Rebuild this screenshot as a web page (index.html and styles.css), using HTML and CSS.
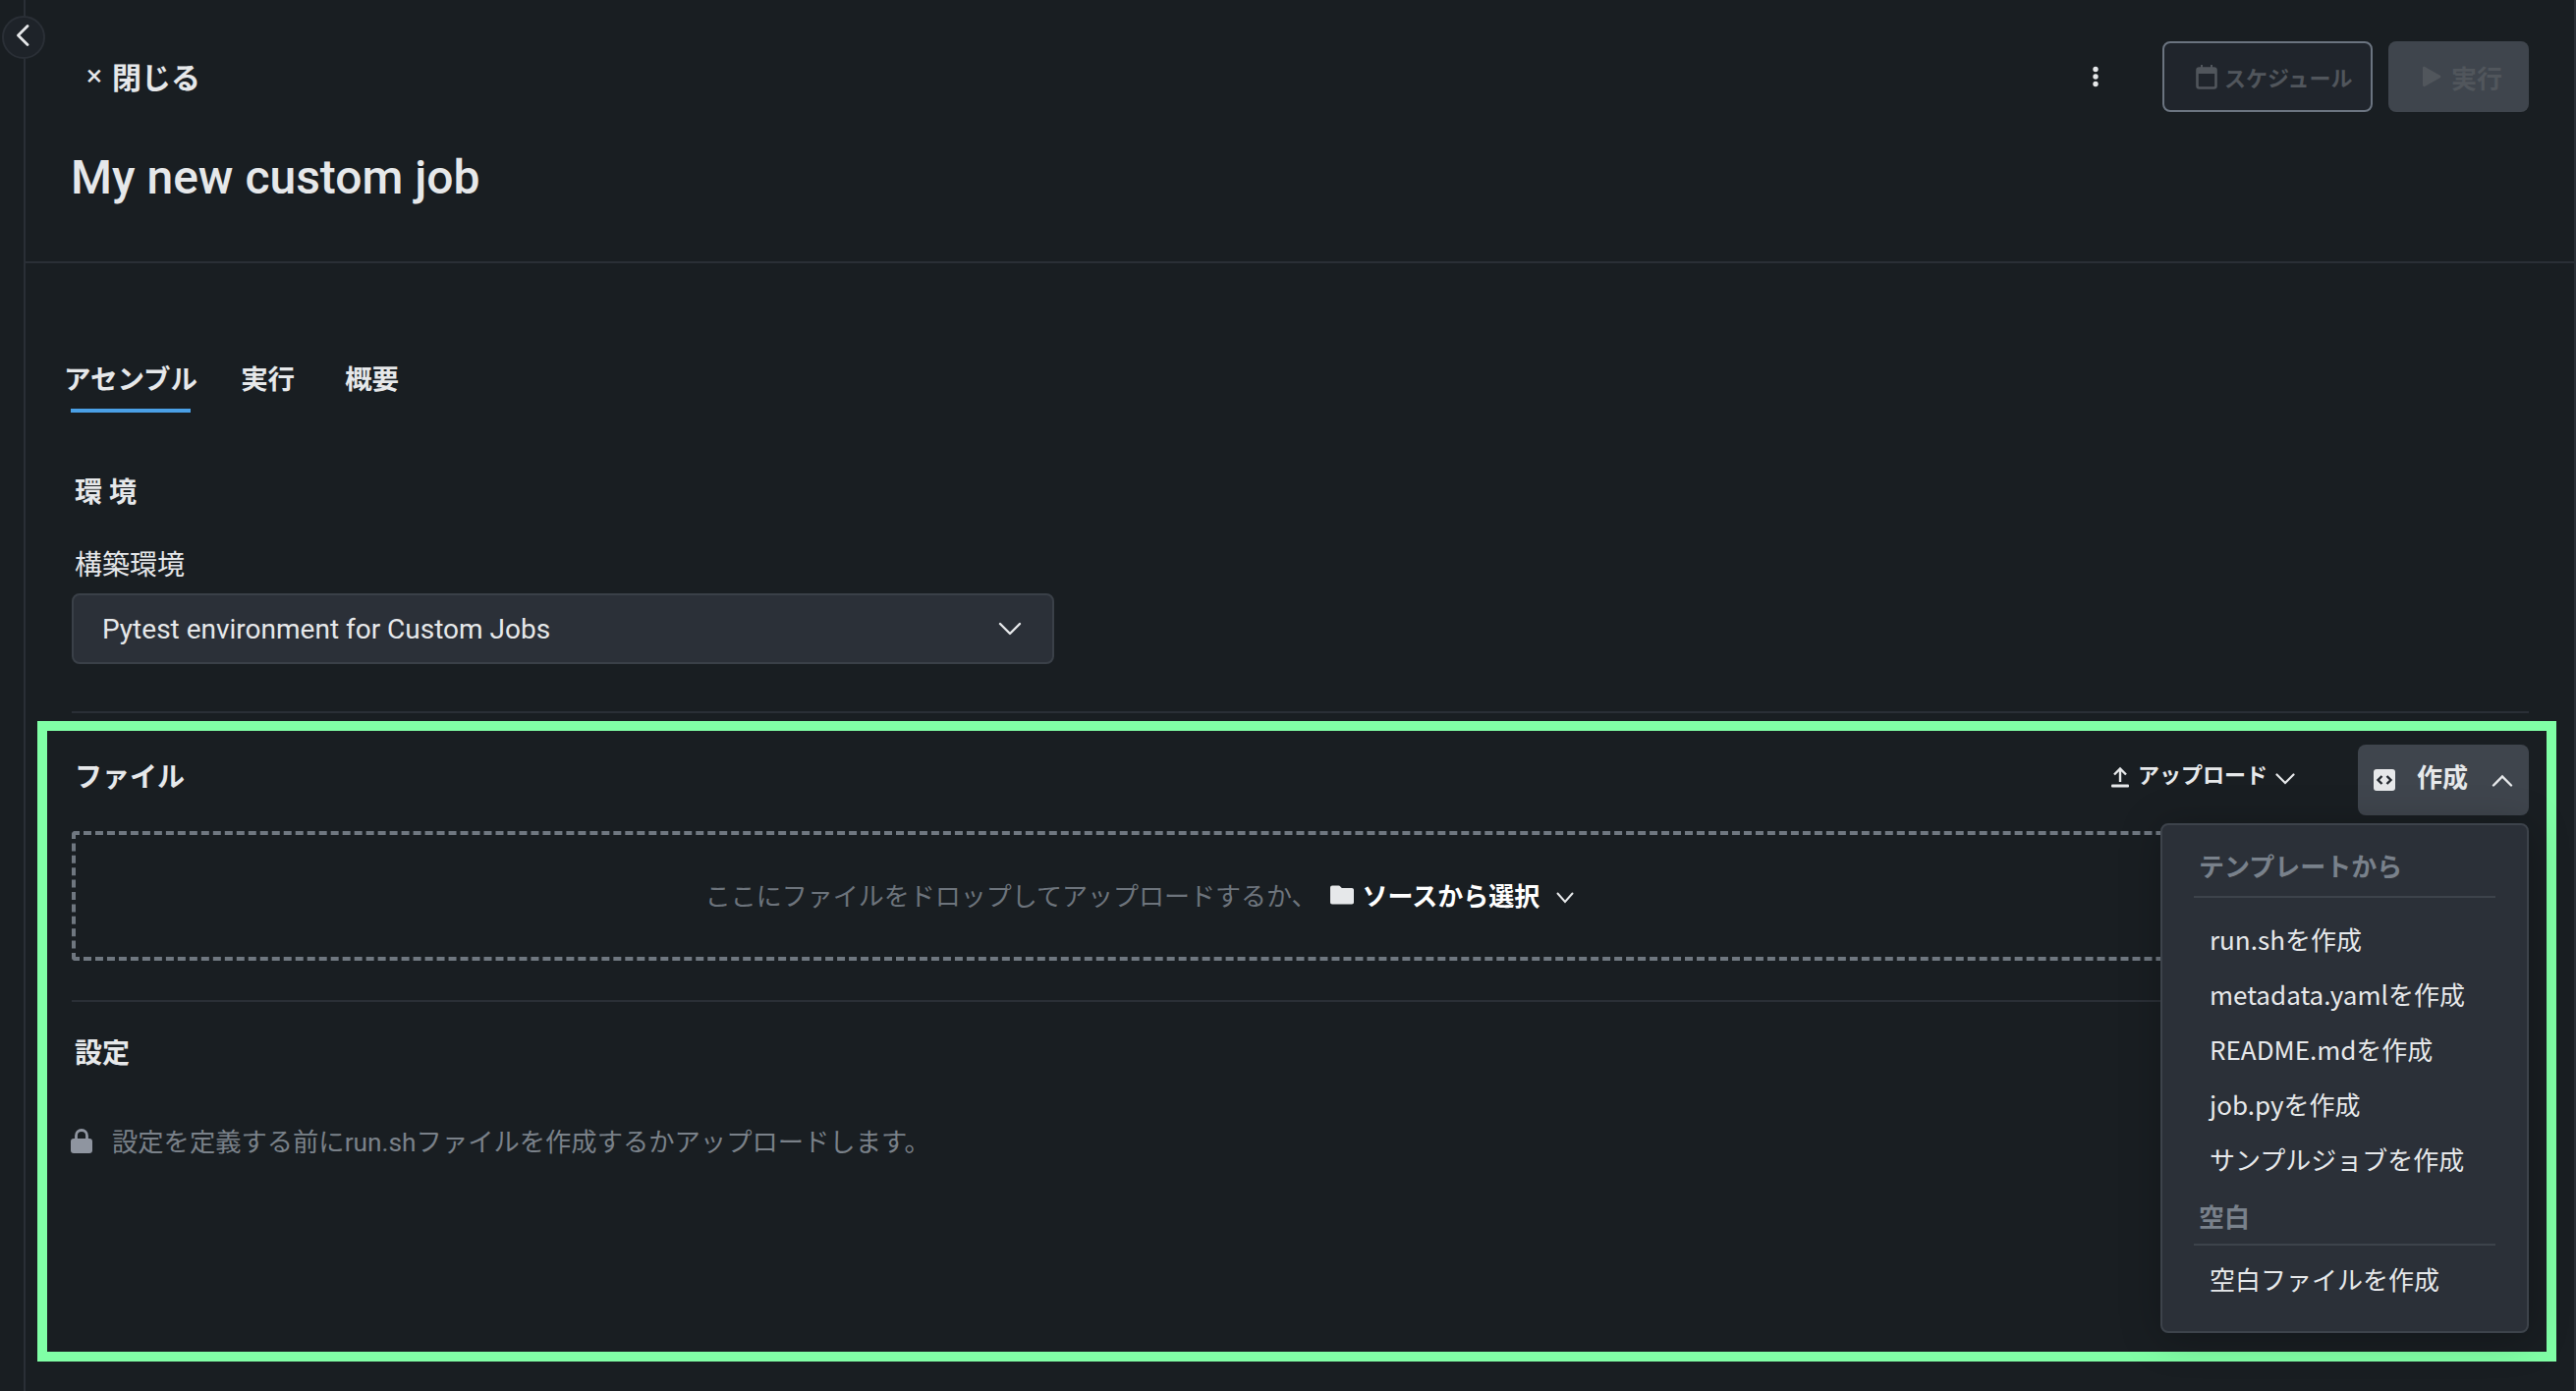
FILE: index.html
```html
<!DOCTYPE html>
<html lang="ja">
<head>
  <meta charset="UTF-8" />
  <title>My new custom job</title>
  <link rel="stylesheet" href="styles.css">
</head>
<body>

  <div class="page">
    <div class="rail">
      <button class="rail-toggle">
        <svg width="14" height="22" viewBox="0 0 14 22"><path d="M12 1.500 2.500 11l9.500 9.500" fill="none" stroke="#e6e8ea" stroke-width="2.800" stroke-linecap="round" stroke-linejoin="round"/></svg>
      </button>
    </div>

    <div class="main">
      <header class="head">
        <div class="head-top">
          <button class="btn-close"><span class="close-x">×</span>閉じる</button>
          <div class="head-actions">
            <svg class="kebab" width="8" height="22" viewBox="0 0 8 22" fill="#e6e8ea"><circle cx="4" cy="3.500" r="2.700"/><circle cx="4" cy="11" r="2.700"/><circle cx="4" cy="18.500" r="2.700"/></svg>
            <button class="btn-schedule">
              <svg width="22" height="25" viewBox="0 0 22 25"><rect x="1.500" y="3.500" width="19" height="20" rx="2" fill="none" stroke="#51565c" stroke-width="2.600"/><rect x="1.500" y="3" width="19" height="6" fill="#51565c"/><rect x="5" y="0" width="2" height="4" fill="#51565c"/><rect x="15" y="0" width="2" height="4" fill="#51565c"/></svg>
              スケジュール
            </button>
            <button class="btn-run">
              <svg width="20" height="22" viewBox="0 0 20 22"><path d="M1 2.200C1 1 2.200.4 3.200 1l15.400 8.800c1 .6 1 1.900 0 2.500L3.200 21c-1 .6-2.200 0-2.200-1.200z" fill="#51565c"/></svg>
              実行
            </button>
          </div>
        </div>
        <h1>My new custom job</h1>
      </header>

      <div class="content">
        <nav class="tabs">
          <a class="tab active"><span>アセンブル</span></a>
          <a class="tab"><span>実行</span></a>
          <a class="tab"><span>概要</span></a>
        </nav>

        <h2 class="section-title env-title">環 境</h2>
        <div class="field-label">構築環境</div>
        <div class="select">
          <span>Pytest environment for Custom Jobs</span>
          <svg width="24" height="14" viewBox="0 0 24 14"><path d="M2 2l10 10L22 2" fill="none" stroke="#e6e8ea" stroke-width="2.400" stroke-linecap="round" stroke-linejoin="round"/></svg>
        </div>
        <hr class="sep env-sep">

        <div class="files-head">
          <h2 class="section-title files-title">ファイル</h2>
          <div class="files-actions">
            <button class="btn-upload">
              <svg width="18" height="22" viewBox="0 0 18 22"><path d="M9 16V3M3 8.500 9 2.500l6 6" fill="none" stroke="#e6e8ea" stroke-width="2.400"/><rect x="0" y="18.500" width="18" height="3" rx="1" fill="#e6e8ea"/></svg>
              <span class="upload-label">アップロード</span>
              <svg class="upload-chev" width="20" height="12" viewBox="0 0 20 12"><path d="M1.500 1.500 10 10l8.500-8.500" fill="none" stroke="#e6e8ea" stroke-width="2.200" stroke-linecap="round"/></svg>
            </button>
            <button class="btn-create">
              <svg width="22" height="22" viewBox="0 0 22 22"><rect width="22" height="22" rx="3" fill="#e6e8ea"/><path d="M8.500 7 4.500 11l4 4M13.500 7l4 4-4 4" fill="none" stroke="#23282e" stroke-width="2.400"/></svg>
              <span>作成</span>
              <svg width="22" height="13" viewBox="0 0 22 13"><path d="M2 11.500l9-9 9 9" fill="none" stroke="#e6e8ea" stroke-width="2.400" stroke-linecap="round"/></svg>
            </button>
          </div>

          <div class="menu">
            <div class="menu-title">テンプレートから</div>
            <div class="menu-items">
              <div class="menu-item">run.shを作成</div>
              <div class="menu-item">metadata.yamlを作成</div>
              <div class="menu-item">README.mdを作成</div>
              <div class="menu-item">job.pyを作成</div>
              <div class="menu-item">サンプルジョブを作成</div>
            </div>
            <div class="menu-title menu-title-2">空白</div>
            <div class="menu-items menu-items-2">
              <div class="menu-item">空白ファイルを作成</div>
            </div>
          </div>
        </div>

        <div class="dropzone">
          <span class="drop-text">ここにファイルをドロップしてアップロードするか、</span>
          <span class="drop-source">
            <svg width="24" height="20" viewBox="0 0 24 20"><path d="M0 2.500C0 1.200 1 .5 2 .5h6.500c.8 0 1.300.4 1.800 1l1.500 1.500H22c1.200 0 2 .8 2 2v12.500c0 1.200-.8 2-2 2H2c-1.200 0-2-.8-2-2z" fill="#e6e8ea"/></svg>
            ソースから選択
            <svg class="source-chev" width="18" height="12" viewBox="0 0 18 12"><path d="M1.500 1.500 9 10l7.500-8.500" fill="none" stroke="#e6e8ea" stroke-width="2" stroke-linecap="round"/></svg>
          </span>
        </div>
        <hr class="sep settings-sep">

        <h2 class="section-title settings-title">設定</h2>
        <div class="locked">
          <svg width="22" height="25" viewBox="0 0 22 25"><path d="M5.500 11V7a5.500 5.500 0 0 1 11 0v4" fill="none" stroke="#8f95a0" stroke-width="2.800"/><rect x="0" y="10" width="22" height="15" rx="3" fill="#8f95a0"/></svg>
          <span>設定を定義する前にrun.shファイルを作成するかアップロードします。</span>
        </div>
      </div>
    </div>
  </div>

  <!-- annotation frame over the screenshot -->
  <div class="highlight"></div>

</body>
</html>
```

FILE: styles.css
```css
body {
  font-family: Roboto, "Noto Sans CJK JP", sans-serif;
  background-color: #191e22;
  color: #e6e8ea;
  margin: 0;
  height: 100vh;
  overflow: hidden;
}

button {
  font-family: inherit;
  border: none;
  background: none;
  color: inherit;
  padding: 0;
}

h1, h2 {
  margin: 0;
}

.page {
  display: flex;
  height: 100%;
}

/* Left rail */
.rail {
  position: relative;
  flex: none;
  width: 24px;
  border-right: 2px solid #2a2f36;
}

.rail-toggle {
  position: absolute;
  top: 16px;
  left: 2px;
  width: 44px;
  height: 44px;
  display: flex;
  align-items: center;
  justify-content: center;
  box-sizing: border-box;
  padding: 0 2px 4px 0;
  background-color: #1e2329;
  border: 2px solid #2a2f36;
  border-radius: 50%;
}

.main {
  flex: 1;
  min-width: 0;
  border-right: 2px solid #2a2f36;
}

/* Header */
.head {
  height: 268px;
  box-sizing: border-box;
  padding: 42px 46px 0 47px;
  border-bottom: 2px solid #2a2f36;
}

.head-top {
  display: flex;
  justify-content: space-between;
  align-items: center;
  height: 72px;
}

.btn-close {
  display: flex;
  align-items: center;
  gap: 10px;
  margin: -3px 0 0 15px;
  font-size: 30px;
  font-weight: 700;
}

.close-x {
  font-size: 30px;
  font-weight: 400;
}

.head-actions {
  display: flex;
  align-items: center;
}

.kebab {
  margin-right: 64px;
}

.btn-schedule,
.btn-run {
  display: flex;
  align-items: center;
  height: 72px;
  box-sizing: border-box;
  border-radius: 8px;
  color: #51565c;
  font-weight: 700;
}

.btn-schedule {
  width: 214px;
  gap: 7px;
  padding-left: 32px;
  font-size: 22px;
  background-color: #20252c;
  border: 2px solid #6b7480;
}

.btn-run {
  width: 143px;
  gap: 10px;
  margin-left: 16px;
  padding-left: 34px;
  font-size: 26px;
  background-color: #3f454d;
}

h1 {
  margin: 35px 0 0 -1px;
  font-size: 48px;
  line-height: 64px;
  font-weight: 500;
}

/* Body */
.content {
  padding: 0 46px 0 47px;
}

.tabs {
  display: flex;
  gap: 51px;
  margin: 99px 0 0 -1px;
}

.tab {
  font-size: 27.5px;
  font-weight: 700;
  line-height: 40px;
  padding-bottom: 9px;
  border-bottom: 4px solid transparent;
}

.tab.active {
  border-bottom-color: #4aa0e6;
}

/* label is wider than its underline */
.tab.active span {
  display: block;
  margin: 0 -7px;
}

.section-title {
  font-size: 28px;
  line-height: 40px;
  font-weight: 700;
  padding-left: 3px;
}

.env-title {
  margin-top: 62px;
}

.field-label {
  margin-top: 34px;
  padding-left: 3px;
  font-size: 28px;
  line-height: 40px;
}

.select {
  display: flex;
  justify-content: space-between;
  align-items: center;
  width: 1000px;
  height: 72px;
  margin-top: 8px;
  box-sizing: border-box;
  padding: 0 31px 0 29px;
  font-size: 28px;
  background-color: #2b3038;
  border: 2px solid #3a4048;
  border-radius: 8px;
}

.sep {
  height: 2px;
  margin: 0;
  border: none;
  background-color: #2a2f36;
}

.env-sep {
  margin-top: 48px;
}

.files-head {
  position: relative;
  display: flex;
  justify-content: space-between;
  align-items: center;
  height: 72px;
  margin-top: 32px;
}

.files-title {
  margin-top: -5px;
}

.files-actions {
  display: flex;
  align-items: center;
}

.btn-upload {
  display: flex;
  align-items: center;
  gap: 9px;
  margin-bottom: 6px;
  font-size: 22px;
  font-weight: 700;
}

.upload-label {
  margin-top: -8px;
}

.upload-chev {
  margin: 4px 0 0 -1px;
}

.btn-create {
  display: flex;
  align-items: center;
  width: 174px;
  height: 72px;
  margin-left: 64px;
  box-sizing: border-box;
  padding-left: 16px;
  font-size: 26px;
  font-weight: 700;
  background-color: #3f454d;
  border-radius: 8px;
}

.btn-create span {
  margin: -10px 24px 0 22px;
}

/* Create menu, open over the dropzone */
.menu {
  position: absolute;
  top: 80px;
  right: 0;
  z-index: 2;
  width: 375px;
  box-sizing: border-box;
  padding: 25px 32px;
  background-color: #2b3038;
  border: 2px solid #3d434b;
  border-radius: 8px;
  box-shadow: 0 4px 40px rgba(0, 0, 0, 0.25);
}

.menu-title {
  padding: 0 0 11px 5px;
  font-size: 26px;
  line-height: 36px;
  font-weight: 700;
  color: #79818b;
  border-bottom: 2px solid #3d434b;
}

.menu-title-2 {
  margin-top: 14px;
  padding-bottom: 8px;
}

.menu-items {
  margin-top: 14px;
}

.menu-items-2 {
  margin-top: 6px;
}

.menu-item {
  padding-left: 16px;
  font-family: "Noto Sans CJK JP", sans-serif;
  font-size: 26px;
  line-height: 56px;
  white-space: nowrap;
}

.dropzone {
  display: flex;
  justify-content: center;
  align-items: center;
  height: 132px;
  margin-top: 16px;
  box-sizing: border-box;
  padding: 0 327px 3px 0;
  font-size: 26px;
  border: 4px dashed #6f7780;
  border-radius: 4px;
}

.drop-text {
  color: #6d747c;
}

.drop-source {
  display: flex;
  align-items: center;
  gap: 9px;
  margin-left: 13px;
  font-weight: 700;
  color: #ffffff;
}

.source-chev {
  margin: 6px 0 0 8px;
}

.settings-sep {
  margin-top: 40px;
}

.settings-title {
  margin-top: 33px;
}

.locked {
  display: flex;
  align-items: center;
  gap: 20px;
  margin: 50px 0 0 -1px;
  font-size: 26.3px;
  line-height: 40px;
  color: #7a8189;
}

.locked svg {
  margin-top: -4px;
}

/* Green annotation frame */
.highlight {
  position: absolute;
  top: 734px;
  left: 38px;
  width: 2564px;
  height: 652px;
  box-sizing: border-box;
  border: 10px solid #80ffa6;
  pointer-events: none;
}
```
